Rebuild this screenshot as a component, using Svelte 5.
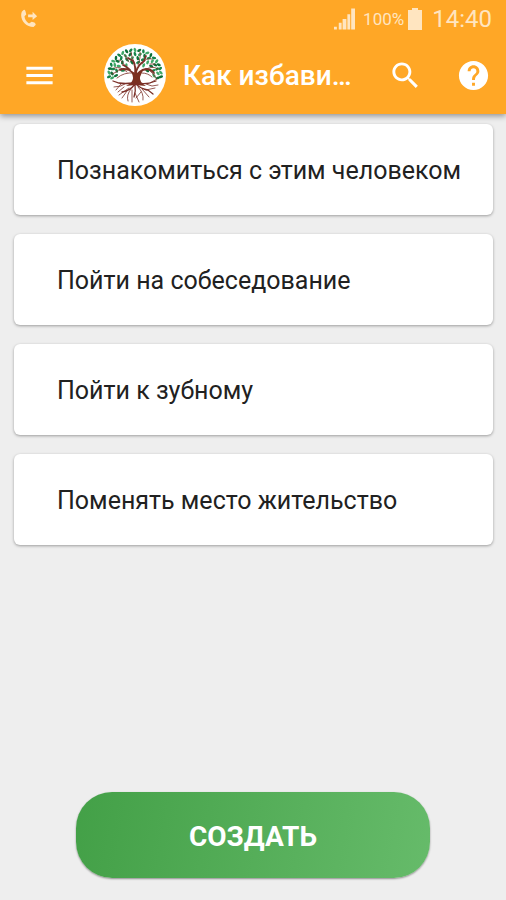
<script lang="ts">
	type Leaf = {
		x: number
		y: number
		angle: number
		color: string
	}

	const tasks = [
		'Познакомиться с этим человеком',
		'Пойти на собеседование',
		'Пойти к зубному',
		'Поменять место жительство'
	]

	const greens = ['#16854a', '#3fa868', '#0d7038']

	// rings of leaves that make up the crown
	function crown(): Leaf[] {
		const rings = [
			{rx: 26, ry: 25, count: 21, from: 176},
			{rx: 23, ry: 21, count: 17, from: 172},
			{rx: 19, ry: 17, count: 12, from: 178},
			{rx: 13, ry: 13, count: 6, from: 200}
		]

		let result: Leaf[] = []

		rings.forEach(({rx, ry, count, from}, ring) => {
			const step = (540 - 2 * from) / (count - 1)
			for (let i = 0; i < count; i++) {
				const angle = from + i * step
				const rad = angle * Math.PI / 180
				result.push({
					x: 31 + rx * Math.cos(rad),
					y: 31 + ry * Math.sin(rad),
					angle: angle + (i % 2 ? 50 : -20),
					color: greens[(i + ring) % 3]
				})
			}
		})

		return result
	}

	const leaves = crown()
</script>

<div class="screen">
	<header>
		<div class="status">
			<svg class="call" viewBox="0 0 20 22" aria-hidden="true">
				<path d="M4 1 2 3C-1 11 6 20 15 20L17 18C18 17 17 16 16 15L13 14 10 16C7 14 5 11 5 8L7 6 6 2Q5 0 4 1Z" />
				<path d="M9 6h5V3l5 5-5 4V9H9Z" />
			</svg>
			<span class="spacer"></span>
			<svg class="signal" viewBox="0 0 22 22" aria-hidden="true">
				<path d="M0 19h3v3H0ZM5 15h3v7H5ZM9 11h4v11H9ZM14 6h3v16h-3ZM18 0h4v22h-4Z" />
			</svg>
			<span class="percent">100%</span>
			<svg class="battery" viewBox="0 0 14 22" aria-hidden="true">
				<path d="M4 0h6v2h4v20H0V2h4Z" />
			</svg>
			<time>14:40</time>
		</div>

		<div class="toolbar">
			<button class="icon" aria-label="Меню">
				<svg viewBox="0 0 24 24"><path d="M3 18h18v-2H3v2zm0-5h18v-2H3v2zm0-7v2h18V6H3z" /></svg>
			</button>

			<svg class="logo" viewBox="0 0 62 62" aria-hidden="true">
				<circle cx="31" cy="31" r="31" fill="#fff" />
				{#each leaves as leaf}
					<ellipse cx={leaf.x} cy={leaf.y} rx="2.2" ry="1.3" fill={leaf.color} transform="rotate({leaf.angle} {leaf.x} {leaf.y})" />
				{/each}
				<g class="branch thin">
					<path d="M30 29Q20 28 13 34M23 28Q17 22 10 24M21 22Q18 16 15 16M31 20Q27 13 27 8M34 21Q37 13 36 8M38 20Q42 13 48 15M41 26Q48 21 54 25M44 25Q50 30 52 34M25 18Q21 13 21 11M38 29Q44 29 48 33M16 25Q12 29 8 30M46 20L51 20" />
				</g>
				<g class="branch">
					<path d="M31 36Q31 29 25 26Q19 24 16 26M31 34Q35 26 42 25Q47 25 50 29M31 30Q32 22 29 17L24 14M32 28Q34 21 40 17L42 12M26 26Q22 22 19 21" />
				</g>
				<path class="trunk" d="M27 27Q31 34 27 39L22 42 31 41 42 42Q35 38 36 33L39 26 33 29 32 22 31 29Z" />
				<g class="branch root">
					<path d="M29 39Q21 40 15 39L9 37M31 40Q26 47 18 48M32 40Q37 45 44 46L49 50M34 39Q42 41 52 37M31 40Q32 47 30 53" />
				</g>
				<g class="branch thin">
					<path d="M21 40Q17 43 10 43M17 40L12 46M25 44L15 51M23 47L18 54M27 45Q22 51 24 57M28 46L28 58M31 49L35 58M34 43Q40 49 39 56M38 45L45 53M42 46L51 44M42 40L48 42 54 41M37 48L32 54M20 43L14 48M46 39L53 35" />
				</g>
			</svg>

			<h1>Как избави…</h1>

			<button class="icon" aria-label="Поиск">
				<svg viewBox="0 0 24 24"><path d="M15.5 14h-.79l-.28-.27C15.41 12.59 16 11.11 16 9.5 16 5.91 13.09 3 9.5 3S3 5.91 3 9.5 5.91 16 9.5 16c1.61 0 3.09-.59 4.23-1.57l.27.28v.79l5 4.99L20.49 19l-4.99-5zm-6 0C7.01 14 5 11.99 5 9.5S7.01 5 9.5 5 14 7.01 14 9.5 11.99 14 9.5 14z" /></svg>
			</button>
			<button class="icon" aria-label="Помощь">
				<svg viewBox="0 0 24 24"><path d="M12 2C6.48 2 2 6.48 2 12s4.48 10 10 10 10-4.48 10-10S17.52 2 12 2zm1 17h-2v-2h2v2zm2.07-7.75l-.9.92C13.45 12.9 13 13.5 13 15h-2v-.5c0-1.1.45-2.1 1.17-2.83l1.24-1.26c.37-.36.59-.86.59-1.41 0-1.1-.9-2-2-2s-2 .9-2 2H8c0-2.21 1.79-4 4-4s4 1.79 4 4c0 .88-.36 1.68-.93 2.25z" /></svg>
			</button>
		</div>
	</header>

	<main>
		{#each tasks as task}
			<button class="card">{task}</button>
		{/each}
	</main>

	<footer>
		<button class="create">СОЗДАТЬ</button>
	</footer>
</div>

<style>
	:global(body) {
		background: #eee;
	}
	.screen {
		min-height: 100vh;
		display: flex;
		flex-direction: column;
		font-family: Roboto, "Noto Sans", sans-serif;
		background: #eee;
	}
	button {
		border: 0;
		margin: 0;
		padding: 0;
		font-family: inherit;
		cursor: pointer;
	}
	header {
		background: #ffa726;
		color: #fff;
		box-shadow: 0 2px 6px rgba(0, 0, 0, .4);
	}
	.status {
		height: 38px;
		padding: 0 14px 0 20px;
		display: flex;
		align-items: center;
		color: #ffe5c0;
	}
	.status svg {
		fill: currentColor;
	}
	.spacer {
		flex: 1;
	}
	.call {
		width: 18px;
		height: 20px;
	}
	.signal {
		width: 21px;
		height: 22px;
	}
	.percent {
		margin: 0 4px 0 8px;
		font-size: 17px;
	}
	.battery {
		width: 14px;
		height: 22px;
	}
	time {
		margin-left: 10px;
		font-size: 24px;
	}
	.toolbar {
		height: 76px;
		padding: 0 15px 2px 22px;
		display: flex;
		align-items: center;
		box-sizing: border-box;
	}
	.icon {
		flex: none;
		width: 35px;
		height: 35px;
		background: none;
		color: #fff;
	}
	.icon svg {
		display: block;
		fill: currentColor;
	}
	.logo {
		flex: none;
		width: 62px;
		height: 62px;
		margin: 0 17px 0 47px;
	}
	.branch {
		fill: none;
		stroke: #7b3028;
		stroke-width: 1.8;
		stroke-linecap: round;
	}
	.root {
		stroke-width: 1.3;
	}
	.thin {
		stroke-width: .8;
	}
	.trunk {
		fill: #7b3020;
	}
	h1 {
		flex: 1;
		margin: 0;
		font-size: 28px;
		font-weight: 500;
		white-space: nowrap;
	}
	.icon + .icon {
		margin-left: 33px;
	}
	main {
		flex: 1;
		padding: 10px 13px 10px 14px;
		display: flex;
		flex-direction: column;
		gap: 19px;
	}
	.card {
		min-height: 91px;
		padding: 2px 16px 0 43px;
		border-radius: 6px;
		background: #fff;
		color: #212121;
		box-shadow: 0 1px 3px rgba(0, 0, 0, .35);
		font-size: 25px;
		text-align: left;
	}
	footer {
		padding: 0 0 22px;
		display: flex;
		justify-content: center;
	}
	.create {
		width: 70%;
		height: 86px;
		padding-top: 2px;
		border-radius: 36px;
		background: linear-gradient(100deg, #43a047, #66bb6a);
		box-shadow: 0 1px 2px rgba(0, 0, 0, .4);
		color: #fff;
		font-size: 28px;
		font-weight: 700;
	}
</style>
